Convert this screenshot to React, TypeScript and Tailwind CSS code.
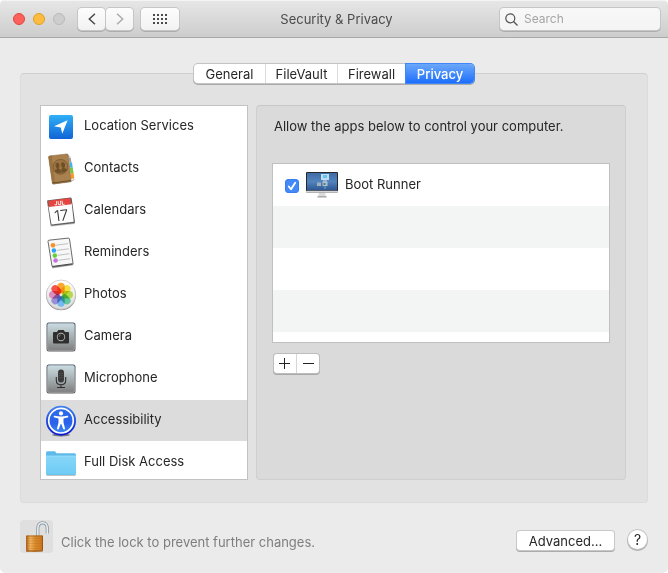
import type { ReactNode } from "react";

function LocationIcon() {
  return (
    <svg viewBox="0 0 32 32" className="size-8 shrink-0" aria-hidden="true">
      <defs>
        <linearGradient id="loc" x1="0" y1="0" x2="0" y2="1">
          <stop offset="0" stopColor="#2fb0f6" />
          <stop offset="1" stopColor="#1263d6" />
        </linearGradient>
      </defs>
      <rect x="4" y="4" width="24" height="24" rx="2" fill="url(#loc)" />
      <path d="M22.6 9.3 17.3 22.8 15.8 16.4 9 15.2Z" fill="#fff" />
    </svg>
  );
}

function ContactsIcon() {
  return (
    <svg viewBox="0 0 32 32" className="size-8 shrink-0" aria-hidden="true">
      <path d="M8 31.4 27 28.6 28.6 26 27 26 8 30Z" fill="#000" opacity=".3" />
      <path d="M22 2.5 25 3.5 29 27 25 28.5Z" fill="#f2f0ec" stroke="#8d8678" strokeWidth=".4" />
      <path d="M23.8 4.5 25.7 5.2 26.3 9.4 24.5 9.4Z" fill="#9d9d9d" />
      <path d="M24.5 9.4 27 9.6 27.7 14.5 25 14.8Z" fill="#45b3ea" />
      <path d="M25 14.8 27.7 14.500 28.500 20 25.600 20.400Z" fill="#73c83e" />
      <path d="M25.600 20.400 28.500 20 29.300 25 26.200 26Z" fill="#f79a2c" />
      <path d="M3.6 4.2Q3.5 3 4.6 2.9L21.9 1Q23 .9 23.2 2L26 27.6Q26.1 28.7 25 28.9L8.6 31Q7.5 31.1 7.3 30Z" fill="#a9814f" stroke="#7d5a30" strokeWidth=".5" />
      <path d="M3.6 4.2Q3.5 3 4.6 2.9L6.8 2.6 10 30.8 8.6 31Q7.5 31.1 7.3 30Z" fill="#9a7242" />
      <path d="M7.6 30 25.8 27.5" stroke="#57401f" strokeWidth=".8" />
      <g transform="rotate(-7 15.5 14)">
        <circle cx="15.5" cy="13.8" r="7.4" fill="#9b7444" stroke="#7c5930" strokeWidth=".8" />
        <g fill="#6f4f26">
          <ellipse cx="12.700" cy="12.200" rx="2" ry="2.700" />
          <ellipse cx="18.300" cy="12.200" rx="2" ry="2.700" />
          <path d="M9 17.500Q9.500 16.200 11.800 15.600V14H13.600V15.600Q14.800 16 15.200 16.800V20Q11.500 20.200 9 17.500Z" />
          <path d="M22 17.500Q21.500 16.200 19.200 15.600V14H17.400V15.600Q16.200 16 15.800 16.800V20Q19.500 20.200 22 17.500Z" />
        </g>
      </g>
    </svg>
  );
}

function CalendarIcon() {
  return (
    <svg viewBox="0 0 32 32" className="size-8 shrink-0" aria-hidden="true">
      <path d="M5.600 31 30 28.300" stroke="#000" strokeOpacity=".2" strokeWidth="1.500" />
      <path d="M3 5.200 25.300 2.400Q26.500 2.300 26.700 3.400L30 27Q30 28 29 28.200L7 30.800Q5.800 30.900 5.500 29.700L2.100 6.500Q2 5.300 3 5.200Z" fill="#5e6063" />
      <path d="M3.500 11.300 26.700 8.400 28.700 26.800 6.500 29.400Z" fill="#fdfdfd" />
      <path d="M3.200 5.700 25.400 3 26.400 9.200 4 12Z" fill="#e5453f" />
      <g transform="rotate(-7 16 16)" fontFamily="Inter, sans-serif" textAnchor="middle">
        <text x="15.500" y="9.800" fontSize="5.500" fontWeight="700" fill="#fff">JUL</text>
        <text x="15.800" y="25.800" fontSize="15" fontWeight="300" fill="#2b2b2b">17</text>
      </g>
    </svg>
  );
}

function RemindersIcon() {
  return (
    <svg viewBox="0 0 32 32" className="size-8 shrink-0" aria-hidden="true">
      <path d="M7 30.800 28.500 27.600" stroke="#000" strokeOpacity=".25" strokeWidth="1.500" />
      <path d="M4 3.200 23.200 1.100Q24.300 1 24.500 2L28 26.200Q28 27.300 27 27.500L8.500 30Q7.300 30.100 7 29L3 4.500Q3 3.300 4 3.200Z" fill="#f7f7f7" stroke="#5a5a5c" strokeWidth=".9" />
      <path d="M7.200 29.500 27.500 26.700" stroke="#444" strokeWidth="1.100" />
      <path d="M11 8.200 23 6.600M12 13.400 23.800 11.800M12.600 18.300 24.500 16.700M13.300 23.300 25.200 21.700" stroke="#a9a9a9" strokeWidth=".7" />
      <circle cx="8" cy="8.300" r="2.400" fill="#f7922b" />
      <circle cx="8.900" cy="13.500" r="2.300" fill="#2ba5f3" />
      <circle cx="9.800" cy="18.600" r="2.300" fill="#66d13b" />
      <circle cx="10.600" cy="23.500" r="2.300" fill="#c473dd" />
    </svg>
  );
}

const petals = [
  { angle: 0, color: "#faa634" },
  { angle: 45, color: "#f5df3c" },
  { angle: 90, color: "#b4da4c" },
  { angle: 135, color: "#62c79a" },
  { angle: 180, color: "#74b8f2" },
  { angle: 225, color: "#998fd6" },
  { angle: 270, color: "#dc8ebd" },
  { angle: 315, color: "#f6524a" },
];

function PhotosIcon() {
  return (
    <svg viewBox="0 0 32 32" className="size-8 shrink-0" aria-hidden="true">
      <defs>
        <linearGradient id="disc" x1="0" y1="0" x2="0" y2="1">
          <stop offset="0" stopColor="#fff" />
          <stop offset="1" stopColor="#d8d8d8" />
        </linearGradient>
      </defs>
      <circle cx="16" cy="16.300" r="15" fill="#8f8f8f" />
      <circle cx="16" cy="15.700" r="14.700" fill="url(#disc)" stroke="#bdbdbd" strokeWidth=".6" />
      <g style={{ isolation: "isolate" }}>
        {petals.map((p) => (
          <rect
            key={p.angle}
            x="12.300"
            y="3.700"
            width="7.400"
            height="10.800"
            rx="3.700"
            fill={p.color}
            transform={`rotate(${p.angle} 16 15.700)`}
            style={{ mixBlendMode: "multiply" }}
          />
        ))}
      </g>
    </svg>
  );
}

function Plate({ children }: { children: ReactNode }) {
  return (
    <svg viewBox="0 0 32 32" className="size-8 shrink-0" aria-hidden="true">
      <defs>
        <linearGradient id="plate" x1="0" y1="0" x2="0" y2="1">
          <stop offset="0" stopColor="#c9dbe0" />
          <stop offset=".55" stopColor="#a3abad" />
          <stop offset="1" stopColor="#7e7e7e" />
        </linearGradient>
        <linearGradient id="rim" x1="0" y1="0" x2="0" y2="1">
          <stop offset="0" stopColor="#4c5b6b" />
          <stop offset="1" stopColor="#5b5b5b" />
        </linearGradient>
      </defs>
      <rect x="1.500" y="1.500" width="29" height="29" rx="2.500" fill="url(#rim)" />
      <rect x="2.600" y="2.600" width="26.800" height="26.800" rx="1.500" fill="url(#plate)" stroke="#dfe7ea" strokeOpacity=".6" strokeWidth=".6" />
      {children}
    </svg>
  );
}

function CameraIcon() {
  return (
    <Plate>
      <path d="M9 11H12l1.300-2h5.400L20 11h3q1 0 1 1v9.500q0 1-1 1H9q-1 0-1-1V12q0-1 1-1Z" fill="#2f2f2f" />
      <circle cx="16" cy="16" r="4.200" fill="#b4b4b4" />
      <circle cx="16" cy="16" r="3.300" fill="#2c2c2c" />
      <path d="M14 16a2 2 0 0 1 2-2" fill="none" stroke="#888" strokeWidth=".6" />
    </Plate>
  );
}

function MicrophoneIcon() {
  return (
    <Plate>
      <rect x="13" y="6.500" width="6" height="13" rx="3" fill="#3a3a3a" />
      <path d="M13.500 10.500h5M13.500 12.500h5M13.500 14.500h5" stroke="#555" strokeWidth=".5" />
      <path d="M11.300 14v3.200q0 4.600 4.700 4.600t4.700-4.600V14M16 21.800v2.400M12 24.500h8" fill="none" stroke="#2f2f2f" strokeWidth="1.100" />
    </Plate>
  );
}

function AccessibilityIcon() {
  return (
    <svg viewBox="0 0 32 32" className="size-8 shrink-0" aria-hidden="true">
      <defs>
        <linearGradient id="acc" x1="0" y1="0" x2="0" y2="1">
          <stop offset="0" stopColor="#2c6bec" />
          <stop offset=".6" stopColor="#2a62ea" />
          <stop offset="1" stopColor="#3d8bf5" />
        </linearGradient>
        <linearGradient id="accRim" x1="0" y1="0" x2="0" y2="1">
          <stop offset="0" stopColor="#3f83ee" />
          <stop offset="1" stopColor="#0a17d0" />
        </linearGradient>
      </defs>
      <ellipse cx="16" cy="30" rx="9" ry="1.500" fill="#555" opacity=".7" />
      <circle cx="16" cy="15.700" r="15" fill="url(#accRim)" />
      <circle cx="16" cy="15.700" r="12.300" fill="url(#acc)" stroke="#fff" strokeWidth="1.700" />
      <circle cx="16" cy="8.400" r="2.100" fill="#fff" />
      <path d="M8.700 11.700Q8.500 10.600 9.600 10.800 16 12.200 22.400 10.800 23.500 10.600 23.300 11.700 23.200 12.400 22.400 12.600L18.500 13.500V17.500L20 23.500Q20 24.500 19.200 24.600 18.400 24.600 18.100 23.800L16.300 19H15.700L13.900 23.800Q13.600 24.600 12.800 24.600 12 24.500 12 23.500L13.500 17.500V13.500L9.600 12.600Q8.800 12.400 8.700 11.700Z" fill="#fff" />
    </svg>
  );
}

function FolderIcon() {
  return (
    <svg viewBox="0 0 32 32" className="size-8 shrink-0" aria-hidden="true">
      <defs>
        <linearGradient id="fold" x1="0" y1="0" x2="0" y2="1">
          <stop offset="0" stopColor="#86d6f8" />
          <stop offset="1" stopColor="#6fcbf5" />
        </linearGradient>
      </defs>
      <path d="M1.500 28.400H30.500" stroke="#777" strokeOpacity=".5" strokeWidth="1" />
      <path d="M1 6Q1 4.300 2.500 4.300H9.300Q10.300 4.300 11 5.400L11.500 6.300H29.500Q31 6.300 31 7.800V26.500Q31 28 29.500 28H2.500Q1 28 1 26.500Z" fill="#5ebbe9" />
      <path d="M1 9H31V26.500Q31 27.600 29.500 27.600H2.500Q1 27.600 1 26.500Z" fill="url(#fold)" />
      <path d="M1 9H31" stroke="#a5e3fb" strokeWidth=".7" />
    </svg>
  );
}

function MonitorIcon() {
  return (
    <svg viewBox="0 0 32 28" className="h-7 w-8 shrink-0" aria-hidden="true">
      <defs>
        <linearGradient id="scr" x1="0" y1="0" x2="0" y2="1">
          <stop offset="0" stopColor="#3d6ba6" />
          <stop offset=".5" stopColor="#5484bd" />
          <stop offset="1" stopColor="#2d5792" />
        </linearGradient>
      </defs>
      <path d="M13 21.500h6l.7 3.500h-7.400Z" fill="#dcdcdc" />
      <path d="M12 25h8l1 1.500H11Z" fill="#a9a9a9" />
      <rect x="0" y="1" width="32" height="20.500" rx="1" fill="#26282c" />
      <rect x="1" y="2" width="30" height="17.300" fill="url(#scr)" />
      <rect x="0" y="19.800" width="32" height="1.700" rx=".800" fill="#d5d5d5" />
      <rect x="15" y="3" width="8" height="6" fill="#bfdcf2" />
      <rect x="17" y="4" width="4" height="3" fill="#60c4ee" />
      <path d="M17 9h4v2h-4Z" fill="#91add0" />
      <rect x="11" y="11.500" width="4" height="3.500" fill="#9fb1bd" />
      <rect x="16.500" y="10.500" width="5" height="4.500" fill="#a9c2cd" />
      <path d="M17.500 12h2v2h-2Z" fill="#5d7786" />
      <path d="M19 15v3" stroke="#7ca2cf" strokeWidth="1" />
    </svg>
  );
}

function LockIcon() {
  return (
    <svg viewBox="0 0 33 33" className="size-[33px]" aria-hidden="true">
      <defs>
        <linearGradient id="brass" x1="0" y1="0" x2="1" y2="0">
          <stop offset="0" stopColor="#a95c13" />
          <stop offset=".25" stopColor="#f2b45e" />
          <stop offset=".55" stopColor="#d98a2c" />
          <stop offset=".9" stopColor="#d07c20" />
          <stop offset="1" stopColor="#8c470b" />
        </linearGradient>
      </defs>
      <path d="M17.800 16.500V9Q17.800 2.800 22.500 2.800 27.300 2.800 27.300 9V13.500" fill="none" stroke="#8f9ba4" strokeWidth="3.200" />
      <path d="M17.800 16.500V9Q17.800 2.800 22.500 2.800 27.300 2.800 27.300 9V14" fill="none" stroke="#e6eef2" strokeWidth="1.500" />
      <path d="M6 16.500Q6 15.500 7 15.500H22Q23 15.500 23 16.500V30Q23 31 22 31L14 32 7 31.500Q6 31.500 6 30.500Z" fill="url(#brass)" />
      <path d="M6.500 18.500h16M6.500 21h16M6.500 23.500h16M6.500 26h16M6.500 28.500h16" stroke="#9c5514" strokeOpacity=".25" strokeWidth=".8" />
      <path d="M6.300 31h16.400" stroke="#8a4a12" strokeWidth="1" />
      <path d="M6.500 16h16" stroke="#9a5a18" strokeWidth=".8" />
    </svg>
  );
}

const categories = [
  { name: "Location Services", icon: <LocationIcon /> },
  { name: "Contacts", icon: <ContactsIcon /> },
  { name: "Calendars", icon: <CalendarIcon /> },
  { name: "Reminders", icon: <RemindersIcon /> },
  { name: "Photos", icon: <PhotosIcon /> },
  { name: "Camera", icon: <CameraIcon /> },
  { name: "Microphone", icon: <MicrophoneIcon /> },
  { name: "Accessibility", icon: <AccessibilityIcon />, selected: true },
  { name: "Full Disk Access", icon: <FolderIcon /> },
];

const tabs = [
  { name: "General", width: "w-[72px]" },
  { name: "FileVault", width: "w-[72px]" },
  { name: "Firewall", width: "w-[68px]" },
  { name: "Privacy", width: "w-[68px]" },
];

const toolButton =
  "flex h-[22px] items-center justify-center rounded bg-linear-to-b from-[#fdfdfd] to-[#f2f2f2] shadow-[0_0_0_1px_#c6c6c6,0_1px_0_1px_#adadad]";

function TitleBar() {
  return (
    <header className="grid h-[38px] grid-cols-[1fr_auto_1fr] items-center border-t border-b border-t-[#f4f4f4] border-b-[#a8a8a8] bg-linear-to-b from-[#e6e6e6] to-[#cdcdcd] pr-2 pl-[13px]">
      <div className="flex items-center">
        <div className="flex gap-2">
          <button aria-label="Close" className="size-3 rounded-full border border-[#e2463f] bg-[#fc615c]" />
          <button aria-label="Minimize" className="size-3 rounded-full border border-[#dfa023] bg-[#fdbc40]" />
          <button aria-label="Zoom" disabled className="size-3 rounded-full border border-[#b9b9b9] bg-[#cdcdcd]" />
        </div>
        <div className="ml-[13px] flex gap-px">
          <button aria-label="Back" className={`${toolButton} w-[27px]`}>
            <svg viewBox="0 0 8 12" className="h-3 w-2" fill="none" stroke="#4a4a4a" strokeWidth="1.500">
              <path d="M7 .8 1.300 6 7 11.200" />
            </svg>
          </button>
          <button aria-label="Forward" disabled className={`${toolButton} w-[27px]`}>
            <svg viewBox="0 0 8 12" className="h-3 w-2" fill="none" stroke="#ababab" strokeWidth="1.500">
              <path d="M1 .8 6.700 6 1 11.200" />
            </svg>
          </button>
        </div>
        <button aria-label="Show All" className={`${toolButton} ml-2 w-[38px]`}>
          <svg viewBox="0 0 14 10" className="h-2.5 w-3.5" fill="#4a4a4a">
            {[0, 4, 8].map((y) =>
              [0, 4, 8, 12].map((x) => <rect key={`${x}-${y}`} x={x} y={y} width="2" height="2" />)
            )}
          </svg>
        </button>
      </div>
      <h1 className="text-[#4b4b4b]">Security &amp; Privacy</h1>
      <label className="flex h-[22px] w-40 items-center gap-1.5 justify-self-end rounded bg-linear-to-b from-[#f8f8f8] to-[#f4f4f4] pl-[5px] shadow-[0_0_0_1px_#c6c6c6,0_1px_0_1px_#adadad]">
        <svg viewBox="0 0 13 13" className="size-[13px] shrink-0" fill="none" stroke="#505050" strokeWidth="1.200">
          <circle cx="5.300" cy="5.300" r="4.500" />
          <path d="m8.500 8.500 4 4" />
        </svg>
        <input type="search" aria-label="Search" placeholder="Search" className="w-full min-w-0 bg-transparent text-xs outline-none placeholder:text-[#a5a5a5]" />
      </label>
    </header>
  );
}

function Tabs() {
  return (
    <div role="tablist" className="relative z-10 mx-auto flex h-[19px] w-[280px] rounded bg-white shadow-[0_0_0_1px_#c4c4c4,0_1px_0_1px_#aaaaaa]">
      {tabs.map((tab) => {
        const active = tab.name === "Privacy";
        return (
          <button
            key={tab.name}
            role="tab"
            aria-selected={active}
            className={`${tab.width} ${
              active
                ? "rounded-r bg-linear-to-b from-[#6ba7f9] to-[#1a6dfb] font-medium text-white shadow-[0_0_0_1px_#3f86f6]"
                : "border-r border-[#dcdcdc]"
            }`}
          >
            {tab.name}
          </button>
        );
      })}
    </div>
  );
}

function CategoryList() {
  return (
    <ul className="h-[375px] w-52 shrink-0 overflow-hidden border border-[#c2c2c2] bg-white">
      {categories.map((c) => (
        <li key={c.name} className="h-[42px]">
          <button
            aria-pressed={!!c.selected}
            className={`flex h-[41px] w-full items-center gap-[7px] pl-1 text-left ${c.selected ? "bg-[#dcdcdc]" : ""}`}
          >
            {c.icon}
            <span className="pb-1">{c.name}</span>
          </button>
        </li>
      ))}
    </ul>
  );
}

function AppPanel() {
  return (
    <section className="flex-1 rounded border border-[#cfcfcf] border-t-[#c8c8c8] bg-[#dadada] px-[15px]">
      <p className="mt-3 pl-0.5">Allow the apps below to control your computer.</p>
      <ul className="mt-[29px] h-[180px] overflow-hidden border border-[#bfc1c1] bg-white">
        <li className="h-[42px]">
          <label className="flex h-full items-center pl-3">
            <span className="mt-0.5 grid size-3.5 place-items-center">
              <input type="checkbox" defaultChecked className="peer col-start-1 row-start-1 size-3.5 appearance-none rounded-[3px] border border-[#bbb] checked:border-[#3b7df0] checked:bg-[#4389f8]" />
              <svg viewBox="0 0 14 14" className="pointer-events-none invisible col-start-1 row-start-1 size-3.5 peer-checked:visible" fill="none" stroke="#fff" strokeWidth="1.800" strokeLinecap="round" strokeLinejoin="round">
                <path d="m3.800 7.500 2.200 2.800 4.200-6.600" />
              </svg>
            </span>
            <span className="ml-[7px]">
              <MonitorIcon />
            </span>
            <span className="ml-[7px] pb-0.5">Boot Runner</span>
          </label>
        </li>
        <li className="h-[42px] bg-[#f3f5f5]" />
        <li className="h-[42px]" />
        <li className="h-[42px] bg-[#f3f5f5]" />
        <li className="h-[42px]" />
      </ul>
      <div className="mt-[11px] ml-0.5 flex h-[19px] w-[45px] rounded-[3px] bg-white shadow-[0_0_0_1px_#bdbdbd,0_1px_0_1px_#a8a8a8]">
        <button aria-label="Add" className="flex w-[23px] items-center border-r border-[#d6d6d6] pl-[5px]">
          <svg viewBox="0 0 11 11" className="size-[11px]" stroke="#222" strokeWidth="1">
            <path d="M0 5.500h11M5.500 0v11" />
          </svg>
        </button>
        <button aria-label="Remove" className="flex flex-1 items-center justify-center">
          <svg viewBox="0 0 11 11" className="size-[11px]" stroke="#222" strokeWidth="1">
            <path d="M0 5.500h11" />
          </svg>
        </button>
      </div>
    </section>
  );
}

export default function App() {
  return (
    <div className="min-h-screen bg-white">
      <main className="flex min-h-screen flex-col overflow-hidden rounded-[5px] bg-[#ebebeb] font-[Inter,'Liberation_Sans',sans-serif] text-[13px] leading-4 text-[#262626]">
        <TitleBar />
        <div className="px-5 pt-[26px]">
          <Tabs />
          <div className="-mt-2.5 flex gap-2 rounded border border-[#dbdbdb] border-t-[#cfcfcf] bg-[#e2e2e2] pt-[31px] pr-[21px] pb-[22px] pl-[19px]">
            <CategoryList />
            <AppPanel />
          </div>
        </div>
        <footer className="mt-[17px] flex items-center pr-[21px] pl-5">
          <button aria-label="Lock" className="rounded bg-[#dfdfdf]">
            <LockIcon />
          </button>
          <p className="mt-2.5 ml-2 text-[#7e7e7e]">Click the lock to prevent further changes.</p>
          <button className="mt-2 ml-auto h-[19px] w-[97px] rounded-[3px] bg-white shadow-[0_0_0_1px_#c8c8c8,0_1px_0_1px_#acacac]">
            Advanced...
          </button>
          <button aria-label="Help" className="mt-1.5 ml-3.5 size-[19px] rounded-full bg-white text-sm leading-none shadow-[0_0_0_1px_#c4c4c4,0_1px_0_1px_#acacac]">
            ?
          </button>
        </footer>
      </main>
    </div>
  );
}
